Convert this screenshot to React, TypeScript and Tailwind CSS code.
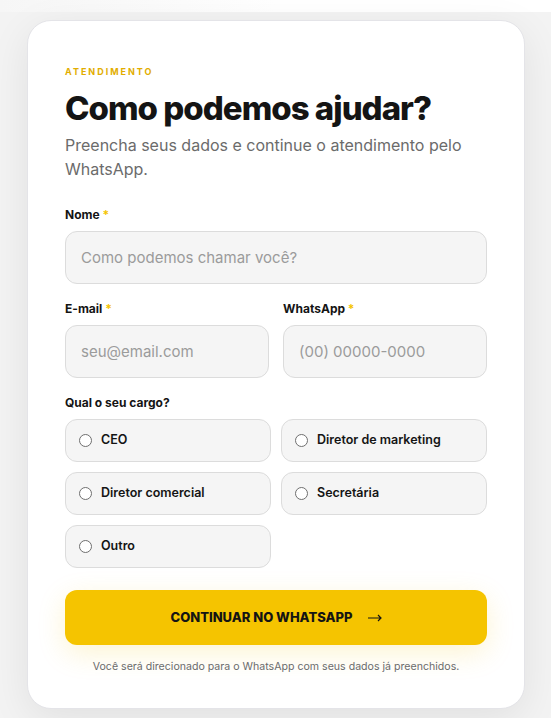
import { useState } from 'react';

const cargos = ['CEO', 'Diretor de marketing', 'Diretor comercial', 'Secretária', 'Outro'];

const Label = ({ children }: { children: React.ReactNode }) => (
  <label className="block text-[12px] font-bold text-[#141414] mb-[8px] leading-[16px]">
    {children} <span className="text-[#f5c400]">*</span>
  </label>
);

export default function App() {
  const [cargo, setCargo] = useState<string | null>(null);

  return (
    <div className="min-h-[718px] w-full bg-[#f3f3f3] font-['Inter',sans-serif]">
      {/* faixa clara do topo */}
      <div className="h-[12px] bg-gradient-to-r from-[#f6f6f6] via-white to-white" />
      <div className="pl-[27px] pr-[26px] pt-[8px] pb-[10px]">
        <div className="bg-white rounded-[24px] border border-[#e4e4e8] shadow-[0_10px_40px_rgba(0,0,0,0.08)] px-[37px] pt-[45px] pb-[33px]">
          <p className="text-[9px] font-bold tracking-[0.22em] text-[#e2ad00] leading-[12px]">ATENDIMENTO</p>
          <h1 className="mt-[10px] text-[33px] font-extrabold tracking-[-0.03em] text-[#141414] leading-[40px]">
            Como podemos ajudar?
          </h1>
          <p className="mt-[5px] text-[16px] text-[#6b6b6b] leading-[24px]">
            Preencha seus dados e continue o atendimento pelo WhatsApp.
          </p>

          <form className="mt-[26px]" onSubmit={(e) => e.preventDefault()}>
            <Label>Nome</Label>
            <input
              placeholder="Como podemos chamar você?"
              className="w-full h-[53px] rounded-[12px] bg-[#f5f5f5] border border-[#dcdcdc] px-[15px] text-[15px] text-[#222] placeholder:text-[#9b9b9b] outline-none"
            />

            <div className="mt-[17px] grid grid-cols-2 gap-[14px]">
              <div>
                <Label>E-mail</Label>
                <input
                  placeholder="seu@email.com"
                  className="w-full h-[53px] rounded-[12px] bg-[#f5f5f5] border border-[#dcdcdc] px-[15px] text-[15px] text-[#222] placeholder:text-[#9b9b9b] outline-none"
                />
              </div>
              <div>
                <Label>WhatsApp</Label>
                <input
                  placeholder="(00) 00000-0000"
                  className="w-full h-[53px] rounded-[12px] bg-[#f5f5f5] border border-[#dcdcdc] px-[15px] text-[15px] text-[#222] placeholder:text-[#9b9b9b] outline-none"
                />
              </div>
            </div>

            <p className="mt-[17px] mb-[8px] text-[12px] font-bold text-[#141414] leading-[16px]">Qual o seu cargo?</p>
            <div className="grid grid-cols-2 gap-x-[10px] gap-y-[10px]">
              {cargos.map((c) => (
                <button
                  type="button"
                  key={c}
                  onClick={() => setCargo(c)}
                  className="h-[43px] flex items-center gap-[9px] rounded-[12px] bg-[#f5f5f5] border border-[#dcdcdc] px-[13px] text-left"
                >
                  <span className="w-[13px] h-[13px] rounded-full border border-[#6f6f6f] bg-white flex items-center justify-center">
                    {cargo === c && <span className="w-[7px] h-[7px] rounded-full bg-[#141414]" />}
                  </span>
                  <span className="text-[12.5px] font-semibold text-[#141414]">{c}</span>
                </button>
              ))}
            </div>

            <button
              type="submit"
              className="mt-[22px] w-full h-[55px] rounded-[12px] bg-[#f5c400] shadow-[0_8px_28px_rgba(245,196,0,0.18)] flex items-center justify-center gap-[15px] text-[13px] font-extrabold text-[#141414]"
            >
              <span>CONTINUAR NO WHATSAPP</span>
              <svg width="14" height="8" viewBox="0 0 14 8" fill="none" stroke="#141414" strokeWidth="1.2">
                <path d="M0 4h13M10 1l3 3-3 3" />
              </svg>
            </button>
            <p className="mt-[14px] text-center text-[10.6px] text-[#6b6b6b]">
              Você será direcionado para o WhatsApp com seus dados já preenchidos.
            </p>
          </form>
        </div>
      </div>
    </div>
  );
}
